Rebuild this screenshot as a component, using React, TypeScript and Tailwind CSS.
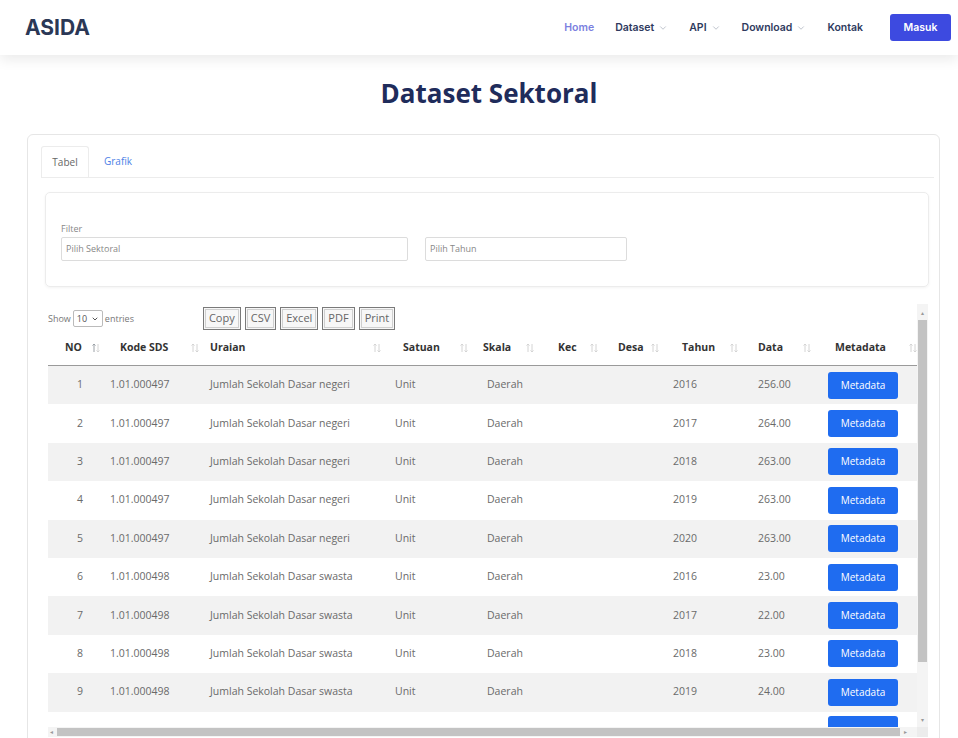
import { ChevronDown } from "lucide-react";

type Row = { no: number; kode: string; uraian: string; tahun: string; data: string };

const rows: Row[] = [
  { no: 1, kode: "1.01.000497", uraian: "Jumlah Sekolah Dasar negeri", tahun: "2016", data: "256.00" },
  { no: 2, kode: "1.01.000497", uraian: "Jumlah Sekolah Dasar negeri", tahun: "2017", data: "264.00" },
  { no: 3, kode: "1.01.000497", uraian: "Jumlah Sekolah Dasar negeri", tahun: "2018", data: "263.00" },
  { no: 4, kode: "1.01.000497", uraian: "Jumlah Sekolah Dasar negeri", tahun: "2019", data: "263.00" },
  { no: 5, kode: "1.01.000497", uraian: "Jumlah Sekolah Dasar negeri", tahun: "2020", data: "263.00" },
  { no: 6, kode: "1.01.000498", uraian: "Jumlah Sekolah Dasar swasta", tahun: "2016", data: "23.00" },
  { no: 7, kode: "1.01.000498", uraian: "Jumlah Sekolah Dasar swasta", tahun: "2017", data: "22.00" },
  { no: 8, kode: "1.01.000498", uraian: "Jumlah Sekolah Dasar swasta", tahun: "2018", data: "23.00" },
  { no: 9, kode: "1.01.000498", uraian: "Jumlah Sekolah Dasar swasta", tahun: "2019", data: "24.00" },
];

// column widths + header / cell offsets
const cols = [
  { label: "NO", w: "w-[55px]", head: "pl-[17px] pr-[3px]", cell: "pl-[29px]", sorted: true },
  { label: "Kode SDS", w: "w-[99px]", head: "pl-[17px] pr-[3px]", cell: "pl-[7px]" },
  { label: "Uraian", w: "w-[182px]", head: "pl-[8px] pr-[3px]", cell: "pl-[8px]" },
  { label: "Satuan", w: "w-[87px]", head: "pl-[19px] pr-[3px]", cell: "pl-[11px]" },
  { label: "Skala", w: "w-[66px]", head: "pl-[12px] pr-[3px]", cell: "pl-[16px]" },
  { label: "Kec", w: "w-[64px]", head: "pl-[21px] pr-[3px]", cell: "pl-[10px]" },
  { label: "Desa", w: "w-[61px]", head: "pl-[17px] pr-[3px]", cell: "pl-[10px]" },
  { label: "Tahun", w: "w-[79px]", head: "pl-[20px] pr-[3px]", cell: "pl-[11px]" },
  { label: "Data", w: "w-[73px]", head: "pl-[17px] pr-[3px]", cell: "pl-[17px]" },
  { label: "Metadata", w: "w-[103px]", head: "pl-[21px] pr-[0px]", cell: "pl-[14px]" },
];

const SortIcon = ({ active }: { active?: boolean }) => (
  <svg width="8" height="10" viewBox="0 0 8 10" className="shrink-0">
    <path d="M2 9V1M0.5 2.5L2 1l1.5 1.5" stroke={active ? "#9aa0a6" : "#d4d4d4"} strokeWidth="1" fill="none" />
    <path d="M6 1v8M4.5 7.5L6 9l1.5-1.5" stroke="#d4d4d4" strokeWidth="1" fill="none" />
  </svg>
);

const NavItem = ({ label, drop, active }: { label: string; drop?: boolean; active?: boolean }) => (
  <span className={`flex items-center gap-[4px] text-[10.5px] font-semibold ${active ? "text-[#7b7fe0]" : "text-[#2f3a5e]"}`}>
    {label}
    {drop && <ChevronDown size={10} strokeWidth={1.5} className="text-gray-400" />}
  </span>
);

const cellText = (row: Row, i: number) => {
  switch (i) {
    case 0: return String(row.no);
    case 1: return row.kode;
    case 2: return row.uraian;
    case 3: return "Unit";
    case 4: return "Daerah";
    case 7: return row.tahun;
    case 8: return row.data;
    default: return "";
  }
};

export default function App() {
  return (
    <div className="h-[738px] w-[958px] overflow-hidden bg-white font-['Open_Sans',sans-serif]">
      <header className="relative z-10 flex h-[55px] items-center justify-between bg-white pl-[25px] pr-[7px] shadow-[0_5px_12px_rgba(0,0,0,0.08)]">
        <span className="font-['Inter',sans-serif] text-[21px] font-bold text-[#2b3856]">ASIDA</span>
        <nav className="flex items-center font-['Inter',sans-serif]">
          <div className="flex items-center gap-[21px] pr-[27px]">
            <NavItem label="Home" active />
            <NavItem label="Dataset" drop />
            <NavItem label="API" drop />
            <NavItem label="Download" drop />
            <NavItem label="Kontak" />
          </div>
          <button className="h-[27px] w-[61px] rounded-[3px] bg-[#3d4ae0] text-[10.5px] font-semibold text-white">Masuk</button>
        </nav>
      </header>

      <h1 className="pl-[20px] pt-[20px] text-center text-[26px] font-bold leading-[36px] text-[#1f2c5b]">Dataset Sektoral</h1>

      <section className="ml-[27px] mt-[23px] w-[913px] rounded-[6px] border border-[#e6e6e6] pb-[40px] pt-[11px]">
        <div className="ml-[13px] mr-[5px] flex border-b border-[#ececec] text-[10px]">
          <div className="flex h-[31px] w-[48px] items-center justify-center rounded-t-[3px] border border-b-0 border-[#ececec] text-[#666]">Tabel</div>
          <div className="flex h-[31px] items-center pl-[15px] text-[#4d7fe6]">Grafik</div>
        </div>

        <div className="ml-[17px] mr-[10px] mt-[14px] h-[95px] rounded-[5px] border border-[#ececec] px-[15px] pt-[30px] shadow-[0_1px_3px_rgba(0,0,0,0.05)]">
          <div className="text-[9px] leading-[12px] text-[#888]">Filter</div>
          <div className="flex gap-[17px] pt-[2px]">
            <div className="flex h-[24px] w-[347px] items-center rounded-[2px] border border-[#dcdcdc] pl-[4px] text-[9px] text-[#888]">Pilih Sektoral</div>
            <div className="flex h-[24px] w-[202px] items-center rounded-[2px] border border-[#dcdcdc] pl-[4px] text-[9px] text-[#888]">Pilih Tahun</div>
          </div>
        </div>

        <div className="ml-[20px] mt-[17px] flex h-[433px] w-[880px] flex-col overflow-hidden">
          <div className="flex min-h-0 flex-1">
            <div className="w-[869px] overflow-hidden">
              <div className="flex h-[27px] items-center pt-[2px] text-[9px] text-[#777]">
                <span>Show</span>
                <span className="mx-[2px] flex h-[17px] w-[30px] items-center justify-between rounded-[2px] border border-[#bbb] px-[3px] text-[#555]">
                  10 <ChevronDown size={8} strokeWidth={3} className="text-[#555]" />
                </span>
                <span>entries</span>
                <div className="ml-[69px] flex gap-[4px]">
                  {["Copy", "CSV", "Excel", "PDF", "Print"].map((b) => (
                    <span key={b} className="flex h-[23px] items-center border-[1.5px] border-[#7a7a7a] bg-[#f7f7f7] px-[5px] text-[11px] text-[#666] outline outline-1 outline-offset-[-3px] outline-[#cfcfcf]">
                      {b}
                    </span>
                  ))}
                </div>
              </div>

              <div className="flex h-[35px] items-center border-b-[1.5px] border-[#9a9a9a] text-[10.5px] font-bold text-[#333]">
                {cols.map((c) => (
                  <div key={c.label} className={`flex h-full shrink-0 items-center justify-between ${c.w} ${c.head}`}>
                    <span>{c.label}</span>
                    <SortIcon active={c.sorted} />
                  </div>
                ))}
              </div>

              {rows.map((r) => (
                <div key={r.no} className={`flex h-[38.4px] items-center text-[10.5px] text-[#6a6a6a] ${r.no % 2 === 1 ? "bg-[#f2f2f2]" : "bg-white"}`}>
                  {cols.map((c, i) => (
                    <div key={c.label} className={`shrink-0 whitespace-nowrap ${c.w} ${c.cell}`}>
                      {i === 9 ? (
                        <span className="flex h-[27px] w-[70px] items-center justify-center rounded-[3px] bg-[#1f6cf0] text-[10px] text-white">Metadata</span>
                      ) : (
                        cellText(r, i)
                      )}
                    </div>
                  ))}
                </div>
              ))}

              {/* next row, scrolled mostly out of view */}
              <div className="flex h-[38.4px] pt-[4px]">
                <div className="ml-[780px] h-[27px] w-[70px] rounded-[3px] bg-[#1f6cf0]" />
              </div>
            </div>

            <div className="flex w-[11px] flex-col items-center bg-[#f4f4f4]">
              <span className="mt-[6px] text-[6px] leading-[6px] text-[#999]">▴</span>
              <div className="mt-[4px] h-[342px] w-[9px] bg-[#c3c3c3]" />
              <div className="flex-1" />
              <span className="mb-[4px] text-[6px] leading-[6px] text-[#999]">▾</span>
            </div>
          </div>

          <div className="flex h-[10px] shrink-0">
            <div className="flex w-[869px] items-center bg-[#f4f4f4]">
              <span className="ml-[2px] text-[6px] leading-[6px] text-[#999]">◂</span>
              <div className="ml-[4px] h-[8px] w-[843px] bg-[#c3c3c3]" />
              <span className="ml-[4px] text-[6px] leading-[6px] text-[#999]">▸</span>
            </div>
            <div className="w-[11px] bg-[#ececec]" />
          </div>
        </div>
      </section>
    </div>
  );
}
